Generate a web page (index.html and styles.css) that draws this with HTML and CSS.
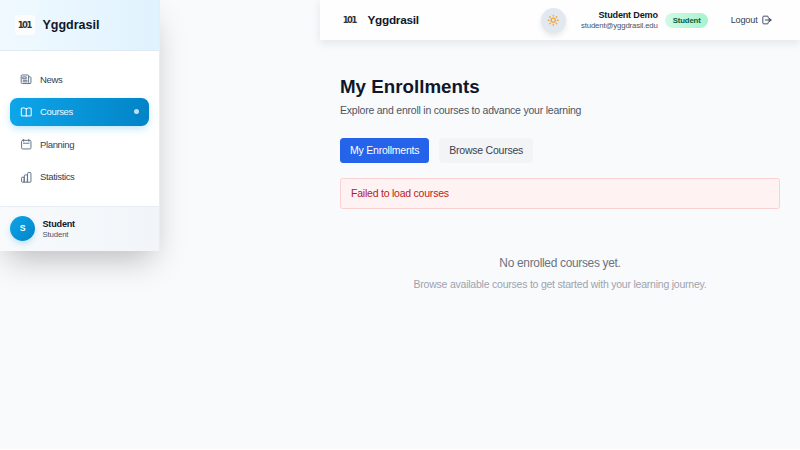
FILE: index.html
```html
<!DOCTYPE html>
<html lang="en">
<head>
<meta charset="utf-8">
<title>Yggdrasil</title>
<link rel="stylesheet" href="styles.css">
</head>
<body>
<div class="app">
  <aside class="sidebar">
    <div class="brand">
      <span class="logo logo-card">101</span>
      <span class="brand-name">Yggdrasil</span>
    </div>
    <nav class="nav">
      <a class="nav-item">
        <svg class="icon" viewBox="0 0 24 24"><path d="M16.5 7.5V4.9c0-.6-.5-1.1-1.1-1.1H3.4c-.6 0-1.1.5-1.1 1.1V18A2.2 2.2 0 0 0 4.500 20.250H19.500M16.500 7.500V18A2.250 2.250 0 0 0 21 18V8.600c0-.6-.5-1.100-1.100-1.100zM6 7.500h6v3.500H6zM6 14h7.500M6 17h7.500"/></svg>
        <span>News</span>
      </a>
      <a class="nav-item active">
        <svg class="icon" viewBox="0 0 24 24"><path d="M12 5.500A9 9 0 0 0 2.500 4.300v14.700H21.500V4.300A9 9 0 0 0 12 5.500zM12 5.500v14.500"/></svg>
        <span>Courses</span>
        <i class="dot"></i>
      </a>
      <a class="nav-item">
        <svg class="icon" viewBox="0 0 24 24"><path d="M7 2.500v4M17 2.500v4M5 4.500h14a2 2 0 0 1 2 2v12.500a2 2 0 0 1-2 2H5a2 2 0 0 1-2-2V6.500a2 2 0 0 1 2-2zM6.500 10h11"/></svg>
        <span>Planning</span>
      </a>
      <a class="nav-item">
        <svg class="icon" viewBox="0 0 24 24"><path d="M3 13.100c0-.6.500-1.100 1.100-1.100h4.200v9.500H4.100c-.6 0-1.100-.5-1.100-1.100zM8.300 8.600c0-.6.500-1.100 1.100-1.100h5.200v14H8.300zM14.600 4.100c0-.6.500-1.100 1.100-1.100h4.200c.6 0 1.100.5 1.100 1.100v16.300c0 .6-.5 1.100-1.100 1.100h-5.300z"/></svg>
        <span>Statistics</span>
      </a>
    </nav>
    <div class="account">
      <span class="avatar">S</span>
      <div class="account-text">
        <div class="account-name">Student</div>
        <div class="account-role">Student</div>
      </div>
    </div>
  </aside>
  <div class="page">
    <header class="topbar">
      <span class="logo">101</span>
      <span class="topbar-name">Yggdrasil</span>
      <button class="theme">
        <svg class="sun" viewBox="0 0 24 24"><circle cx="12" cy="12" r="4"/><path d="M12 2.500v1.500M12 20v1.500M2.500 12H4M20 12h1.500M5.300 5.300l1 1M17.700 17.700l1 1M5.300 18.700l1-1M17.700 6.300l1-1"/></svg>
      </button>
      <div class="profile">
        <div class="profile-name">Student Demo</div>
        <div class="profile-mail">student@yggdrasil.edu</div>
      </div>
      <span class="badge">Student</span>
      <button class="logout">Logout
        <svg class="exit" viewBox="0 0 24 24"><path d="M15 7V5a2.200 2.200 0 0 0-2.200-2.200H4.200A2.200 2.200 0 0 0 2 5v14a2.200 2.200 0 0 0 2.200 2.200h8.600A2.200 2.200 0 0 0 15 19v-2M8 12h14M18 8l4 4-4 4z"/></svg>
      </button>
    </header>
    <main class="content">
      <h1>My Enrollments</h1>
      <p class="lead">Explore and enroll in courses to advance your learning</p>
      <div class="tabs">
        <button class="tab selected">My Enrollments</button>
        <button class="tab">Browse Courses</button>
      </div>
      <div class="alert">Failed to load courses</div>
      <div class="empty">
        <p class="empty-title">No enrolled courses yet.</p>
        <p class="empty-text">Browse available courses to get started with your learning journey.</p>
      </div>
    </main>
  </div>
</div>
</body>
</html>
```
FILE: styles.css
```css
* { box-sizing: border-box; margin: 0; padding: 0; }
html { background: #fff; }
body {
  height: 449px;
  overflow: hidden;
  font: 10.500px/15px "Liberation Sans", Arial, sans-serif;
  letter-spacing: -.224px;
  color: #0f172a;
}
button { border: 0; background: none; font: inherit; letter-spacing: inherit; color: inherit; }
svg { fill: none; stroke: currentColor; stroke-linecap: round; stroke-linejoin: round; flex: none; }
.app { display: flex; align-items: flex-start; height: 449px; background: #f9fafc; }
.sidebar {
  width: 160px;
  margin-right: 160px;
  flex: none;
  background: #fff;
  border-right: 1px solid #e8edf3;
  box-shadow: 0 15px 30px -7px rgba(0, 0, 0, .25);
}
.brand {
  display: flex;
  align-items: center;
  gap: 7.500px;
  height: 50.600px;
  padding: 0 15px;
  padding-top: 1px;
  background: linear-gradient(90deg, #f0f9ff, #e0f2fe);
  border-bottom: 1px solid #dfeaf3;
}
.logo {
  width: 20px;
  height: 20px;
  flex: none;
  font: bold 9.400px/20px "DejaVu Sans Condensed", "DejaVu Sans", sans-serif;
  letter-spacing: -1.600px;
  text-indent: -1.500px;
  text-align: center;
  color: #333;
}
.logo-card { height: 20px; background: #fcfcfc; border-radius: 2px; line-height: 19px; }
.brand-name { font-size: 12.500px; font-weight: bold; line-height: 17.500px; letter-spacing: 0; }
.nav { display: flex; flex-direction: column; gap: 5px; padding: 15px 10px; }
.nav-item {
  display: flex;
  align-items: center;
  gap: 7.500px;
  height: 27.500px;
  padding: 0 10px;
  border-radius: 7.500px;
  font-size: 9.500px;
  letter-spacing: -.350px;
  color: #334155;
}
.icon { width: 12.500px; height: 12.500px; stroke-width: 1.900; color: #64748b; }
.active {
  background: linear-gradient(90deg, #0ea5e9, #0284c7);
  box-shadow: 0 3px 9px -1px rgba(14, 165, 233, .3);
  color: #f0f9ff;
}
.active .icon { color: #fff; }
.dot { width: 5px; height: 5px; margin-left: auto; border-radius: 50%; background: #bfe1f3; }
.account {
  display: flex;
  align-items: center;
  gap: 7.500px;
  height: 45px;
  padding: 0 10px;
  padding-bottom: 1px;
  border-top: 1px solid #e8edf3;
  background: linear-gradient(90deg, #f8fafc, #f1f5f9);
}
.account-text { padding-top: 2px; }
.avatar {
  width: 25px;
  height: 25px;
  border-radius: 50%;
  background: linear-gradient(135deg, #0ea5e9, #0284c7);
  box-shadow: 0 3px 6px -1px rgba(14, 165, 233, .3);
  color: #fff;
  font-weight: bold;
  font-size: 8.750px;
  line-height: 25px;
  text-align: center;
}
.account-name, .profile-name {
  font-size: 9.100px;
  font-weight: bold;
  line-height: 12.500px;
  letter-spacing: -.200px;
}
.account-role, .profile-mail {
  font-size: 7.800px;
  line-height: 10px;
  letter-spacing: -.145px;
  color: #475569;
}
.page { flex: 1; }
.topbar {
  display: flex;
  align-items: center;
  height: 40px;
  padding: 0 20px;
  background: #fefefe;
  box-shadow: 0 3px 9px rgba(15, 23, 42, .09);
}
.topbar-name { margin-left: 7.500px; font-size: 11.800px; font-weight: bold; letter-spacing: -.280px; }
.theme {
  display: grid;
  place-items: center;
  width: 25px;
  height: 25px;
  margin-left: auto;
  border-radius: 50%;
  background: #e2e8f0;
  box-shadow: 0 3px 6px -1px rgba(0, 0, 0, .12);
}
.sun { width: 12.500px; height: 12.500px; stroke: #f3a638; stroke-width: 2.600; }
.profile { margin-left: 15px; text-align: right; }
.badge {
  margin-left: 7.500px;
  padding: 0 7.500px;
  border-radius: 8px;
  background: linear-gradient(90deg, #d1fae5, #a7f3d0);
  font-size: 7.800px;
  font-weight: bold;
  line-height: 15px;
  letter-spacing: -.160px;
  color: #065f46;
}
.logout {
  display: flex;
  align-items: center;
  gap: 4px;
  margin-left: 15px;
  padding: 0 8.500px 0 7.500px;
  font-size: 9.200px;
  letter-spacing: -.210px;
  color: #334155;
}
.exit { width: 10px; height: 10px; stroke-width: 2.200; }
.content { padding: 36px 20px 0; }
h1 { font-size: 18.750px; line-height: 22.500px; letter-spacing: 0; }
.lead { margin-top: 4px; color: #4b5563; }
.tabs { display: flex; gap: 10px; margin: 20px 0 15px; }
.tab {
  height: 25px;
  padding: 0 10px;
  border-radius: 3.500px;
  background: #f3f4f6;
  color: #374151;
}
.selected { background: #2563eb; color: #fff; }
.alert {
  height: 31.500px;
  padding: 7px 10px;
  border: 1px solid #fbd0d0;
  border-radius: 2.500px;
  background: #fef2f2;
  color: #b91c1c;
}
.empty { padding-top: 45.500px; text-align: center; }
.empty-title {
  margin-bottom: 5px;
  font-size: 11.900px;
  line-height: 17.500px;
  letter-spacing: -.290px;
  color: #6b7280;
}
.empty-text { color: #9ca3af; }
```
